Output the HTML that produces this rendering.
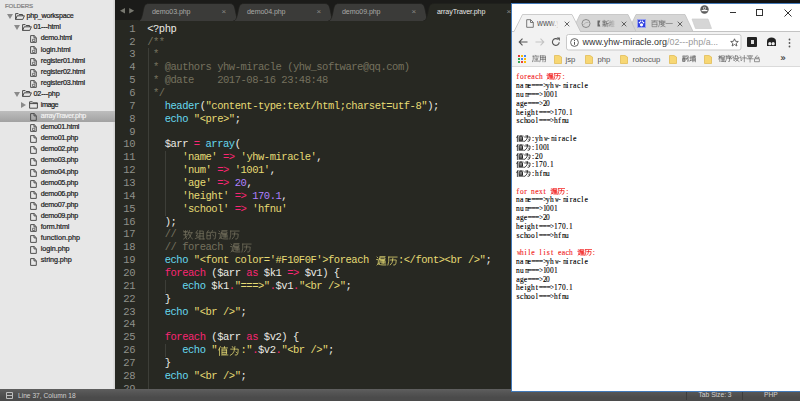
<!DOCTYPE html><html><head><meta charset="utf-8"><style>
*{margin:0;padding:0;box-sizing:border-box}
html,body{width:800px;height:401px;overflow:hidden;background:#121212;position:relative;font-family:"Liberation Sans",sans-serif}
.a{position:absolute}
#side{left:0;top:0;width:115px;height:390px;background:#e7e7e7}
.r{position:absolute;left:0;width:115px;height:11px}
.t{position:absolute;font-size:7.2px;line-height:11px;color:#1a1a1a;white-space:nowrap;-webkit-text-stroke:0.2px #1a1a1a}
.sel{background:linear-gradient(#bdbdbd,#a2a2a2)}
.sel .t{color:#f4f4f4;-webkit-text-stroke:0.15px #f4f4f4}
#ed{left:115px;top:0;width:396px;height:390px;background:#272822;overflow:hidden}
.ln{position:absolute;font-family:"Liberation Mono",monospace;font-size:10.5px;letter-spacing:-0.47px;line-height:13px;color:#8f908a;text-align:right;width:30px;left:-10px;white-space:pre}
.L{position:absolute;font-family:"Liberation Mono",monospace;font-size:10.5px;letter-spacing:-0.47px;line-height:13px;color:#ebebe5;white-space:pre}
.k{color:#f92672}.f{color:#66d9ef}.s{color:#e6db74}.n{color:#ae81ff}.c{color:#75715e}
.cj{display:inline-block;vertical-align:top}
#status{left:0;top:389px;width:800px;height:12px;background:linear-gradient(#5f5f5f,#555 30%,#4b4b4b 70%)}
#br{left:511px;top:3px;width:289px;height:389px;background:#fff;border:1px solid #4279b8;border-right:none}
.ct{position:absolute;left:516px;font-family:"Liberation Serif",serif;font-size:7.8px;line-height:8.76px;color:#000;white-space:pre;-webkit-text-stroke:0.12px currentColor}.ct i{display:inline-block;width:3.8px;text-align:center;font-style:normal;vertical-align:top;white-space:nowrap}.ct b{font-weight:normal}
</style></head><body>
<div id="side" class="a">
<div class="a" style="left:113px;top:0;width:2px;height:390px;background:linear-gradient(90deg,#e2e2e2,#d2d2d2)"></div>
<div class="a" style="left:5px;top:0.7px;font-size:6.1px;line-height:9px;color:#808080;letter-spacing:-0.12px;-webkit-text-stroke:0.2px #808080">FOLDERS</div>
<div class="r" style="top:11.10px">
<svg class="a" style="left:6.5px;top:3.0px" width="6" height="5" viewBox="0 0 6 5"><path d="M0 0h6l-3 5z" fill="#8a8a8a"/></svg>
<svg class="a" style="left:15px;top:1.6px" width="10" height="7" viewBox="0 0 10 7"><path d="M0.6 6.4V0.6h2.6l0.9 0.9h3.4v1.3 M0.6 6.4l1.6-3.6h7.2l-1.6 3.6z" fill="none" stroke="#3a3a3a" stroke-width="0.9" stroke-linejoin="round"/></svg>
<div class="t" style="left:26.5px;top:-0.80px;letter-spacing:-0.256px">php_workspace</div>
</div>
<div class="r" style="top:22.21px">
<svg class="a" style="left:14px;top:3.0px" width="6" height="5" viewBox="0 0 6 5"><path d="M0 0h6l-3 5z" fill="#8a8a8a"/></svg>
<svg class="a" style="left:22px;top:1.6px" width="10" height="7" viewBox="0 0 10 7"><path d="M0.6 6.4V0.6h2.6l0.9 0.9h3.4v1.3 M0.6 6.4l1.6-3.6h7.2l-1.6 3.6z" fill="none" stroke="#3a3a3a" stroke-width="0.9" stroke-linejoin="round"/></svg>
<div class="t" style="left:33.5px;top:-0.82px;letter-spacing:-0.189px">01---html</div>
</div>
<div class="r" style="top:33.32px">
<svg class="a" style="left:29.5px;top:2px" width="7" height="8" viewBox="0 0 7 8"><path d="M0.6 0.6h3.6l2.1 2.1v4.7h-5.7z M4 0.6v2.3h2.3" fill="none" stroke="#4a4a4a" stroke-width="0.95" stroke-linejoin="round"/><path d="M2.6 4.2h2.2v2.3h-2.2z" fill="none" stroke="#555" stroke-width="0.8"/></svg>
<div class="t" style="left:40.8px;top:-0.85px;letter-spacing:-0.268px">demo.html</div>
</div>
<div class="r" style="top:44.43px">
<svg class="a" style="left:29.5px;top:2px" width="7" height="8" viewBox="0 0 7 8"><path d="M0.6 0.6h3.6l2.1 2.1v4.7h-5.7z M4 0.6v2.3h2.3" fill="none" stroke="#4a4a4a" stroke-width="0.95" stroke-linejoin="round"/><path d="M2.6 4.2h2.2v2.3h-2.2z" fill="none" stroke="#555" stroke-width="0.8"/></svg>
<div class="t" style="left:40.8px;top:-0.87px;letter-spacing:-0.101px">login.html</div>
</div>
<div class="r" style="top:55.54px">
<svg class="a" style="left:29.5px;top:2px" width="7" height="8" viewBox="0 0 7 8"><path d="M0.6 0.6h3.6l2.1 2.1v4.7h-5.7z M4 0.6v2.3h2.3" fill="none" stroke="#4a4a4a" stroke-width="0.95" stroke-linejoin="round"/><path d="M2.6 4.2h2.2v2.3h-2.2z" fill="none" stroke="#555" stroke-width="0.8"/></svg>
<div class="t" style="left:40.8px;top:-0.89px;letter-spacing:-0.234px">register01.html</div>
</div>
<div class="r" style="top:66.65px">
<svg class="a" style="left:29.5px;top:2px" width="7" height="8" viewBox="0 0 7 8"><path d="M0.6 0.6h3.6l2.1 2.1v4.7h-5.7z M4 0.6v2.3h2.3" fill="none" stroke="#4a4a4a" stroke-width="0.95" stroke-linejoin="round"/><path d="M2.6 4.2h2.2v2.3h-2.2z" fill="none" stroke="#555" stroke-width="0.8"/></svg>
<div class="t" style="left:40.8px;top:-0.92px;letter-spacing:-0.234px">register02.html</div>
</div>
<div class="r" style="top:77.76px">
<svg class="a" style="left:29.5px;top:2px" width="7" height="8" viewBox="0 0 7 8"><path d="M0.6 0.6h3.6l2.1 2.1v4.7h-5.7z M4 0.6v2.3h2.3" fill="none" stroke="#4a4a4a" stroke-width="0.95" stroke-linejoin="round"/><path d="M2.6 4.2h2.2v2.3h-2.2z" fill="none" stroke="#555" stroke-width="0.8"/></svg>
<div class="t" style="left:40.8px;top:-0.94px;letter-spacing:-0.234px">register03.html</div>
</div>
<div class="r" style="top:88.87px">
<svg class="a" style="left:14px;top:3.0px" width="6" height="5" viewBox="0 0 6 5"><path d="M0 0h6l-3 5z" fill="#8a8a8a"/></svg>
<svg class="a" style="left:22px;top:1.6px" width="10" height="7" viewBox="0 0 10 7"><path d="M0.6 6.4V0.6h2.6l0.9 0.9h3.4v1.3 M0.6 6.4l1.6-3.6h7.2l-1.6 3.6z" fill="none" stroke="#3a3a3a" stroke-width="0.9" stroke-linejoin="round"/></svg>
<div class="t" style="left:33.5px;top:-0.96px;letter-spacing:-0.139px">02---php</div>
</div>
<div class="r" style="top:99.98px">
<svg class="a" style="left:20.5px;top:2.5px" width="5" height="6" viewBox="0 0 5 6"><path d="M0 0v6l5-3z" fill="#8a8a8a"/></svg>
<svg class="a" style="left:29px;top:1.3px" width="9" height="8" viewBox="0 0 9 8"><path d="M0.6 7.2V0.8h2.8l0.9 1h4.1v5.4z M0.6 2.6h7.8" fill="none" stroke="#3a3a3a" stroke-width="0.9" stroke-linejoin="round"/></svg>
<div class="t" style="left:40.8px;top:-0.98px;letter-spacing:-0.482px">image</div>
</div>
<div class="r sel" style="top:111.09px">
<svg class="a" style="left:29.5px;top:2px" width="7" height="8" viewBox="0 0 7 8"><path d="M0.6 0.6h3.6l2.1 2.1v4.7h-5.7z M4 0.6v2.3h2.3" fill="none" stroke="#4a4a4a" stroke-width="0.95" stroke-linejoin="round"/></svg>
<div class="t" style="left:40.8px;top:-1.01px;letter-spacing:-0.357px">arrayTraver.php</div>
</div>
<div class="r" style="top:122.20px">
<svg class="a" style="left:29.5px;top:2px" width="7" height="8" viewBox="0 0 7 8"><path d="M0.6 0.6h3.6l2.1 2.1v4.7h-5.7z M4 0.6v2.3h2.3" fill="none" stroke="#4a4a4a" stroke-width="0.95" stroke-linejoin="round"/><path d="M2.6 4.2h2.2v2.3h-2.2z" fill="none" stroke="#555" stroke-width="0.8"/></svg>
<div class="t" style="left:40.8px;top:-1.03px;letter-spacing:-0.293px">demo01.html</div>
</div>
<div class="r" style="top:133.31px">
<svg class="a" style="left:29.5px;top:2px" width="7" height="8" viewBox="0 0 7 8"><path d="M0.6 0.6h3.6l2.1 2.1v4.7h-5.7z M4 0.6v2.3h2.3" fill="none" stroke="#4a4a4a" stroke-width="0.95" stroke-linejoin="round"/></svg>
<div class="t" style="left:40.8px;top:-1.05px;letter-spacing:-0.283px">demo01.php</div>
</div>
<div class="r" style="top:144.42px">
<svg class="a" style="left:29.5px;top:2px" width="7" height="8" viewBox="0 0 7 8"><path d="M0.6 0.6h3.6l2.1 2.1v4.7h-5.7z M4 0.6v2.3h2.3" fill="none" stroke="#4a4a4a" stroke-width="0.95" stroke-linejoin="round"/></svg>
<div class="t" style="left:40.8px;top:-1.08px;letter-spacing:-0.283px">demo02.php</div>
</div>
<div class="r" style="top:155.53px">
<svg class="a" style="left:29.5px;top:2px" width="7" height="8" viewBox="0 0 7 8"><path d="M0.6 0.6h3.6l2.1 2.1v4.7h-5.7z M4 0.6v2.3h2.3" fill="none" stroke="#4a4a4a" stroke-width="0.95" stroke-linejoin="round"/></svg>
<div class="t" style="left:40.8px;top:-1.10px;letter-spacing:-0.283px">demo03.php</div>
</div>
<div class="r" style="top:166.64px">
<svg class="a" style="left:29.5px;top:2px" width="7" height="8" viewBox="0 0 7 8"><path d="M0.6 0.6h3.6l2.1 2.1v4.7h-5.7z M4 0.6v2.3h2.3" fill="none" stroke="#4a4a4a" stroke-width="0.95" stroke-linejoin="round"/></svg>
<div class="t" style="left:40.8px;top:-1.12px;letter-spacing:-0.283px">demo04.php</div>
</div>
<div class="r" style="top:177.75px">
<svg class="a" style="left:29.5px;top:2px" width="7" height="8" viewBox="0 0 7 8"><path d="M0.6 0.6h3.6l2.1 2.1v4.7h-5.7z M4 0.6v2.3h2.3" fill="none" stroke="#4a4a4a" stroke-width="0.95" stroke-linejoin="round"/></svg>
<div class="t" style="left:40.8px;top:-1.15px;letter-spacing:-0.283px">demo05.php</div>
</div>
<div class="r" style="top:188.86px">
<svg class="a" style="left:29.5px;top:2px" width="7" height="8" viewBox="0 0 7 8"><path d="M0.6 0.6h3.6l2.1 2.1v4.7h-5.7z M4 0.6v2.3h2.3" fill="none" stroke="#4a4a4a" stroke-width="0.95" stroke-linejoin="round"/></svg>
<div class="t" style="left:40.8px;top:-1.17px;letter-spacing:-0.283px">demo06.php</div>
</div>
<div class="r" style="top:199.97px">
<svg class="a" style="left:29.5px;top:2px" width="7" height="8" viewBox="0 0 7 8"><path d="M0.6 0.6h3.6l2.1 2.1v4.7h-5.7z M4 0.6v2.3h2.3" fill="none" stroke="#4a4a4a" stroke-width="0.95" stroke-linejoin="round"/></svg>
<div class="t" style="left:40.8px;top:-1.19px;letter-spacing:-0.283px">demo07.php</div>
</div>
<div class="r" style="top:211.08px">
<svg class="a" style="left:29.5px;top:2px" width="7" height="8" viewBox="0 0 7 8"><path d="M0.6 0.6h3.6l2.1 2.1v4.7h-5.7z M4 0.6v2.3h2.3" fill="none" stroke="#4a4a4a" stroke-width="0.95" stroke-linejoin="round"/></svg>
<div class="t" style="left:40.8px;top:-1.21px;letter-spacing:-0.283px">demo09.php</div>
</div>
<div class="r" style="top:222.19px">
<svg class="a" style="left:29.5px;top:2px" width="7" height="8" viewBox="0 0 7 8"><path d="M0.6 0.6h3.6l2.1 2.1v4.7h-5.7z M4 0.6v2.3h2.3" fill="none" stroke="#4a4a4a" stroke-width="0.95" stroke-linejoin="round"/><path d="M2.6 4.2h2.2v2.3h-2.2z" fill="none" stroke="#555" stroke-width="0.8"/></svg>
<div class="t" style="left:40.8px;top:-1.24px;letter-spacing:-0.178px">form.html</div>
</div>
<div class="r" style="top:233.30px">
<svg class="a" style="left:29.5px;top:2px" width="7" height="8" viewBox="0 0 7 8"><path d="M0.6 0.6h3.6l2.1 2.1v4.7h-5.7z M4 0.6v2.3h2.3" fill="none" stroke="#4a4a4a" stroke-width="0.95" stroke-linejoin="round"/></svg>
<div class="t" style="left:40.8px;top:-1.26px;letter-spacing:-0.002px">function.php</div>
</div>
<div class="r" style="top:244.41px">
<svg class="a" style="left:29.5px;top:2px" width="7" height="8" viewBox="0 0 7 8"><path d="M0.6 0.6h3.6l2.1 2.1v4.7h-5.7z M4 0.6v2.3h2.3" fill="none" stroke="#4a4a4a" stroke-width="0.95" stroke-linejoin="round"/></svg>
<div class="t" style="left:40.8px;top:-1.28px;letter-spacing:-0.047px">login.php</div>
</div>
<div class="r" style="top:255.52px">
<svg class="a" style="left:29.5px;top:2px" width="7" height="8" viewBox="0 0 7 8"><path d="M0.6 0.6h3.6l2.1 2.1v4.7h-5.7z M4 0.6v2.3h2.3" fill="none" stroke="#4a4a4a" stroke-width="0.95" stroke-linejoin="round"/></svg>
<div class="t" style="left:40.8px;top:-1.31px;letter-spacing:-0.082px">string.php</div>
</div>
</div>
<div id="ed" class="a">
<div class="a" style="left:0;top:0;width:396px;height:20px;background:#1b1b19"></div>
<svg class="a" style="left:5px;top:8px" width="20" height="6" viewBox="0 0 20 6"><path d="M0 2.75L5 0v5.5z M9.2 0v5.5l5-2.75z" transform="translate(0 0)" fill="#77776f"/></svg>
<svg class="a" style="left:23.00px;top:0" width="102.60" height="21" viewBox="0 0 102.60 21"><path d="M0 21 C3 21 4 17 5 12 C6 6 7 3.5 11 3.5 H91.60 C95.60 3.5 96.60 6 97.60 12 C98.60 17 99.60 21 102.60 21 Z" fill="#3b3b39"/><path d="M0 21 C3 21 4 17 5 12 C6 6 7 3.5 11 3.5 H91.60 C95.60 3.5 96.60 6 97.60 12 C98.60 17 99.60 21 102.60 21" fill="none" stroke="#1f1f1d" stroke-width="0.7"/></svg>
<div class="a" style="left:37.00px;top:6px;font-size:7.1px;line-height:12px;color:#a9a9a6;white-space:nowrap;letter-spacing:-0.1px">demo03.php</div>
<div class="a" style="left:106.50px;top:6px;font-size:8px;line-height:12px;color:#8a8a86">&#215;</div>
<svg class="a" style="left:118.00px;top:0" width="102.60" height="21" viewBox="0 0 102.60 21"><path d="M0 21 C3 21 4 17 5 12 C6 6 7 3.5 11 3.5 H91.60 C95.60 3.5 96.60 6 97.60 12 C98.60 17 99.60 21 102.60 21 Z" fill="#3b3b39"/><path d="M0 21 C3 21 4 17 5 12 C6 6 7 3.5 11 3.5 H91.60 C95.60 3.5 96.60 6 97.60 12 C98.60 17 99.60 21 102.60 21" fill="none" stroke="#1f1f1d" stroke-width="0.7"/></svg>
<div class="a" style="left:132.00px;top:6px;font-size:7.1px;line-height:12px;color:#a9a9a6;white-space:nowrap;letter-spacing:-0.1px">demo04.php</div>
<div class="a" style="left:201.50px;top:6px;font-size:8px;line-height:12px;color:#8a8a86">&#215;</div>
<svg class="a" style="left:213.00px;top:0" width="102.60" height="21" viewBox="0 0 102.60 21"><path d="M0 21 C3 21 4 17 5 12 C6 6 7 3.5 11 3.5 H91.60 C95.60 3.5 96.60 6 97.60 12 C98.60 17 99.60 21 102.60 21 Z" fill="#3b3b39"/><path d="M0 21 C3 21 4 17 5 12 C6 6 7 3.5 11 3.5 H91.60 C95.60 3.5 96.60 6 97.60 12 C98.60 17 99.60 21 102.60 21" fill="none" stroke="#1f1f1d" stroke-width="0.7"/></svg>
<div class="a" style="left:227.00px;top:6px;font-size:7.1px;line-height:12px;color:#a9a9a6;white-space:nowrap;letter-spacing:-0.1px">demo09.php</div>
<div class="a" style="left:296.50px;top:6px;font-size:8px;line-height:12px;color:#8a8a86">&#215;</div>
<svg class="a" style="left:308.00px;top:0" width="102.60" height="21" viewBox="0 0 102.60 21"><path d="M0 21 C3 21 4 17 5 12 C6 6 7 3.5 11 3.5 H91.60 C95.60 3.5 96.60 6 97.60 12 C98.60 17 99.60 21 102.60 21 Z" fill="#272822"/><path d="M0 21 C3 21 4 17 5 12 C6 6 7 3.5 11 3.5 H91.60 C95.60 3.5 96.60 6 97.60 12 C98.60 17 99.60 21 102.60 21" fill="none" stroke="#1f1f1d" stroke-width="0.7"/></svg>
<div class="a" style="left:322.00px;top:6px;font-size:7.1px;line-height:12px;color:#e8e8e8;white-space:nowrap;letter-spacing:-0.1px">arrayTraver.php</div>
<div class="a" style="left:391.50px;top:6px;font-size:8px;line-height:12px;color:#8a8a86">&#215;</div>
<div class="a" style="left:32.50px;top:48.42px;width:1px;height:360.08px;background:#3d3e38"></div>
<div class="a" style="left:49.99px;top:151.30px;width:1px;height:64.30px;background:#3d3e38"></div>
<div class="a" style="left:49.99px;top:279.90px;width:1px;height:12.86px;background:#3d3e38"></div>
<div class="a" style="left:49.99px;top:344.20px;width:1px;height:12.86px;background:#3d3e38"></div>
<div class="ln" style="top:22.70px">1</div>
<div class="L" style="left:32.20px;top:22.70px">&lt;?php</div>
<div class="ln" style="top:35.56px">2</div>
<div class="L" style="left:32.20px;top:35.56px"><span class="c">/**</span></div>
<div class="ln" style="top:48.42px">3</div>
<div class="L" style="left:32.20px;top:48.42px"><span class="c"> *</span></div>
<div class="ln" style="top:61.28px">4</div>
<div class="L" style="left:32.20px;top:61.28px"><span class="c"> * @authors yhw-miracle (yhw_software@qq.com)</span></div>
<div class="ln" style="top:74.14px">5</div>
<div class="L" style="left:32.20px;top:74.14px"><span class="c"> * @date    2017-08-16 23:48:48</span></div>
<div class="ln" style="top:87.00px">6</div>
<div class="L" style="left:32.20px;top:87.00px"><span class="c"> */</span></div>
<div class="ln" style="top:99.86px">7</div>
<div class="L" style="left:32.20px;top:99.86px">   <span class="f">header</span>(<span class="s">&quot;content-type:text/html;charset=utf-8&quot;</span>);</div>
<div class="ln" style="top:112.72px">8</div>
<div class="L" style="left:32.20px;top:112.72px">   <span class="f">echo</span> <span class="s">&quot;&lt;pre&gt;&quot;</span>;</div>
<div class="ln" style="top:125.58px">9</div>
<div class="ln" style="top:138.44px">10</div>
<div class="L" style="left:32.20px;top:138.44px">   $arr <span class="k">=</span> <span class="f">array</span>(</div>
<div class="ln" style="top:151.30px">11</div>
<div class="L" style="left:32.20px;top:151.30px">      <span class="s">&#x27;name&#x27;</span> <span class="k">=&gt;</span> <span class="s">&#x27;yhw-miracle&#x27;</span>,</div>
<div class="ln" style="top:164.16px">12</div>
<div class="L" style="left:32.20px;top:164.16px">      <span class="s">&#x27;num&#x27;</span> <span class="k">=&gt;</span> <span class="s">&#x27;1001&#x27;</span>,</div>
<div class="ln" style="top:177.02px">13</div>
<div class="L" style="left:32.20px;top:177.02px">      <span class="s">&#x27;age&#x27;</span> <span class="k">=&gt;</span> <span class="n">20</span>,</div>
<div class="ln" style="top:189.88px">14</div>
<div class="L" style="left:32.20px;top:189.88px">      <span class="s">&#x27;height&#x27;</span> <span class="k">=&gt;</span> <span class="n">170.1</span>,</div>
<div class="ln" style="top:202.74px">15</div>
<div class="L" style="left:32.20px;top:202.74px">      <span class="s">&#x27;school&#x27;</span> <span class="k">=&gt;</span> <span class="s">&#x27;hfnu&#x27;</span></div>
<div class="ln" style="top:215.60px">16</div>
<div class="L" style="left:32.20px;top:215.60px">   );</div>
<div class="ln" style="top:228.46px">17</div>
<div class="L" style="left:32.20px;top:228.46px">   <span class="c">// </span><svg class="cj" style="vertical-align:top" width="58.30" height="13.00" viewBox="0 0 58.30 13.00"><g transform="translate(0.83 1.80) scale(0.8333)"><path d="M1 2.5h4.5 M3.2 1v5 M1.2 1.3l1 1.5 M5.3 1.3l-1 1.5 M1 6h5 M2.5 6l2 5 M5 7.5l-4 3.5 M8 1l-1.5 4 M7 3.5h4.5 M10.5 3.5q-1 5 -4 7.5 M7.5 5.5q1.5 4 4 5.5" fill="none" stroke="#75715e" stroke-width="0.900" stroke-linecap="square"/></g><g transform="translate(12.49 1.80) scale(0.8333)"><path d="M3.5 1l-2 3h3l-2.5 3.5h3.5 M1 10.5l4-1.5 M6.5 1.5h4v9.5 M6.5 1.5v9.5 M6.5 4.5h4 M6.5 7.5h4 M5.5 11h6.5" fill="none" stroke="#75715e" stroke-width="0.900" stroke-linecap="square"/></g><g transform="translate(24.15 1.80) scale(0.8333)"><path d="M2.5 1l-1 1.5 M1.5 3h3.5v8h-3.5z M1.5 7h3.5 M7.5 1l-1 2.5 M7 3h4.5q0 6-1 8h-1 M8 6l1 1.5" fill="none" stroke="#75715e" stroke-width="0.900" stroke-linecap="square"/></g><g transform="translate(35.81 1.80) scale(0.8333)"><path d="M1.5 1.5l1 1 M1 4.5h2v5l-1.5 1.5 M2.5 9.5q2 2 9.5 1.5 M5 1h6 M5 2.5h6v2h-6z M5 2.5v5l-1 2 M6 5.5h5v4 M6 7.5h5 M7.5 5.5v4 M9 5.5v4" fill="none" stroke="#75715e" stroke-width="0.900" stroke-linecap="square"/></g><g transform="translate(47.47 1.80) scale(0.8333)"><path d="M1.5 1.5h10 M1.5 1.5v5l-1 4.5 M3.5 5h7q0 5-1.5 6h-1.5 M6.5 3q0 6-3 8" fill="none" stroke="#75715e" stroke-width="0.900" stroke-linecap="square"/></g></svg></div>
<div class="ln" style="top:241.32px">18</div>
<div class="L" style="left:32.20px;top:241.32px">   <span class="c">// foreach </span><svg class="cj" style="vertical-align:top" width="23.32" height="13.00" viewBox="0 0 23.32 13.00"><g transform="translate(0.83 1.80) scale(0.8333)"><path d="M1.5 1.5l1 1 M1 4.5h2v5l-1.5 1.5 M2.5 9.5q2 2 9.5 1.5 M5 1h6 M5 2.5h6v2h-6z M5 2.5v5l-1 2 M6 5.5h5v4 M6 7.5h5 M7.5 5.5v4 M9 5.5v4" fill="none" stroke="#75715e" stroke-width="0.900" stroke-linecap="square"/></g><g transform="translate(12.49 1.80) scale(0.8333)"><path d="M1.5 1.5h10 M1.5 1.5v5l-1 4.5 M3.5 5h7q0 5-1.5 6h-1.5 M6.5 3q0 6-3 8" fill="none" stroke="#75715e" stroke-width="0.900" stroke-linecap="square"/></g></svg></div>
<div class="ln" style="top:254.18px">19</div>
<div class="L" style="left:32.20px;top:254.18px">   <span class="f">echo</span> <span class="s">"&lt;font color='#F10F0F'&gt;foreach <svg class="cj" style="vertical-align:top" width="23.32" height="13.00" viewBox="0 0 23.32 13.00"><g transform="translate(0.83 1.80) scale(0.8333)"><path d="M1.5 1.5l1 1 M1 4.5h2v5l-1.5 1.5 M2.5 9.5q2 2 9.5 1.5 M5 1h6 M5 2.5h6v2h-6z M5 2.5v5l-1 2 M6 5.5h5v4 M6 7.5h5 M7.5 5.5v4 M9 5.5v4" fill="none" stroke="#e6db74" stroke-width="0.900" stroke-linecap="square"/></g><g transform="translate(12.49 1.80) scale(0.8333)"><path d="M1.5 1.5h10 M1.5 1.5v5l-1 4.5 M3.5 5h7q0 5-1.5 6h-1.5 M6.5 3q0 6-3 8" fill="none" stroke="#e6db74" stroke-width="0.900" stroke-linecap="square"/></g></svg>:&lt;/font&gt;&lt;br /&gt;"</span>;</div>
<div class="ln" style="top:267.04px">20</div>
<div class="L" style="left:32.20px;top:267.04px">   <span class="k">foreach</span> ($arr <span class="k">as</span> $k1 <span class="k">=&gt;</span> $v1) {</div>
<div class="ln" style="top:279.90px">21</div>
<div class="L" style="left:32.20px;top:279.90px">      <span class="f">echo</span> $k1<span class="k">.</span><span class="s">&quot;===&gt;&quot;</span><span class="k">.</span>$v1<span class="k">.</span><span class="s">&quot;&lt;br /&gt;&quot;</span>;</div>
<div class="ln" style="top:292.76px">22</div>
<div class="L" style="left:32.20px;top:292.76px">   }</div>
<div class="ln" style="top:305.62px">23</div>
<div class="L" style="left:32.20px;top:305.62px">   <span class="f">echo</span> <span class="s">&quot;&lt;br /&gt;&quot;</span>;</div>
<div class="ln" style="top:318.48px">24</div>
<div class="ln" style="top:331.34px">25</div>
<div class="L" style="left:32.20px;top:331.34px">   <span class="k">foreach</span> ($arr <span class="k">as</span> $v2) {</div>
<div class="ln" style="top:344.20px">26</div>
<div class="L" style="left:32.20px;top:344.20px">      <span class="f">echo</span> <span class="s">"<svg class="cj" style="vertical-align:top" width="23.32" height="13.00" viewBox="0 0 23.32 13.00"><g transform="translate(0.83 1.80) scale(0.8333)"><path d="M3 1l-2 4 M2 3.5v8 M4.5 2.5h7 M8 1v1.5 M5.5 4h5v6h-5z M5.5 6h5 M5.5 8h5 M4.5 11h7.5" fill="none" stroke="#e6db74" stroke-width="0.900" stroke-linecap="square"/></g><g transform="translate(12.49 1.80) scale(0.8333)"><path d="M3.5 1l1 1.5 M6.5 1l-1 5.5q-1 3.5-4.5 5 M1.5 4h9q0 6-1.5 7h-2 M8 7.5l1 1" fill="none" stroke="#e6db74" stroke-width="0.900" stroke-linecap="square"/></g></svg>:"</span><span class="k">.</span>$v2<span class="k">.</span><span class="s">&quot;&lt;br /&gt;&quot;</span>;</div>
<div class="ln" style="top:357.06px">27</div>
<div class="L" style="left:32.20px;top:357.06px">   }</div>
<div class="ln" style="top:369.92px">28</div>
<div class="L" style="left:32.20px;top:369.92px">   <span class="f">echo</span> <span class="s">&quot;&lt;br /&gt;&quot;</span>;</div>
<div class="ln" style="top:382.78px">29</div>
</div>
<div id="status" class="a">
<svg class="a" style="left:6px;top:2.7px" width="7" height="7" viewBox="0 0 7 7"><path d="M0.5 0.5h6v6h-6z M0.5 3.5h6" fill="none" stroke="#bdbdbd" stroke-width="1"/></svg>
<div class="a" style="left:18px;top:1.5px;font-size:6.65px;line-height:10px;color:#cfcfcf;white-space:nowrap">Line 37, Column 18</div>
<div class="a" style="left:686px;top:0;width:1px;height:11px;background:#3c3c3c"></div>
<div class="a" style="left:742px;top:0;width:1px;height:11px;background:#3c3c3c"></div>
<div class="a" style="left:698.5px;top:0.8px;font-size:6.7px;line-height:10px;color:#cfcfcf;white-space:nowrap">Tab Size: 3</div>
<div class="a" style="left:764px;top:0.8px;font-size:6.7px;line-height:10px;color:#cfcfcf;white-space:nowrap">PHP</div>
</div>
<div id="br" class="a"></div>
<svg class="a" style="left:512px;top:4px" width="288" height="69" viewBox="512 4 288 69"><rect x="511" y="31" width="289" height="36" fill="#f2f2f2"/><path d="M511 31.5H800" stroke="#c3c3c3" stroke-width="1"/><path d="M692 19H708L711.5 28.5H695.5Z" fill="#d6d6d6" stroke="#cbcbcb" stroke-width="0.7"/><path d="M628 31.5L636 14.5H685L693 31.5Z" fill="#d6d6d6" stroke="#c0c0c0" stroke-width="0.8"/><path d="M572 31.5L580 14.5H628L636 31.5Z" fill="#d6d6d6" stroke="#c0c0c0" stroke-width="0.8"/><path d="M514 31.5L522.5 14.5H572L580.5 31.5" fill="#f2f2f2" stroke="#c0c0c0" stroke-width="0.8"/><rect x="514.5" y="31" width="65.5" height="1" fill="#f2f2f2"/><path d="M511 66.5H800" stroke="#dadada" stroke-width="1"/><rect x="566.5" y="34.5" width="174.5" height="15.5" rx="2" fill="#fff" stroke="#c9c9c9" stroke-width="1"/></svg>
<svg class="a" style="left:525.5px;top:18.5px" width="8" height="9" viewBox="0 0 8 9"><path d="M0.7 0.7h4l2.6 2.6v5h-6.6z M4.5 0.7v2.8h2.8" fill="none" stroke="#6a6a6a" stroke-width="0.9"/></svg>
<div class="a" style="left:537px;top:18px;font-size:8.2px;line-height:11px;color:#555;white-space:nowrap;width:21px;overflow:hidden">www.y</div>
<div class="a" style="left:550px;top:17px;width:9px;height:12px;background:linear-gradient(90deg,rgba(242,242,242,0),#f2f2f2)"></div>
<svg class="a" style="left:563.5px;top:20.5px" width="6" height="6" viewBox="0 0 6 6"><path d="M0.7 0.7l4.6 4.6M5.3 0.7l-4.6 4.6" stroke="#555" stroke-width="0.9"/></svg>
<svg class="a" style="left:581px;top:19px" width="10" height="9" viewBox="0 0 10 9"><circle cx="5" cy="4.5" r="4" fill="none" stroke="#8a8a8a" stroke-width="1"/><path d="M2.5 6c1-2 3-3 5-2.5" fill="none" stroke="#aaa" stroke-width="0.8"/></svg>
<svg class="a" style="left:595.5px;top:18.5px" width="19.20" height="9.00" viewBox="0 0 19.20 9.00"><g transform="translate(-0.20 1.10) scale(0.5667)"><path d="M3 0.5h5l-2 5.5 2 5.5h-5z" fill="#666"/></g><g transform="translate(6.20 1.10) scale(0.5667)"><path d="M3.5 0.5v1.5 M1 2h5 M2 3l1 1.5 M5 3l-1 1.5 M1 5h5 M3.5 5v6.5 M1 8h5 M2.5 8.5l-1.5 2 M4.5 8.5l1.5 2 M11 1l-3.5 1.5v4l-1 4.5 M7.5 6h4 M9.8 6v5.5" fill="none" stroke="#666" stroke-width="1.059" stroke-linecap="square"/></g><g transform="translate(12.60 1.10) scale(0.5667)"><path d="M1 4h3.5 M2.8 1v10l-1-0.5 M1 9l3.5-2 M6.5 1l-1 3 M6 3v8.5 M6 3h5.5 M8.5 1.5v10 M6 5.5h5 M6 8h5 M6 11h6" fill="none" stroke="#666" stroke-width="1.059" stroke-linecap="square"/></g></svg>
<div class="a" style="left:607px;top:17px;width:9px;height:11px;background:linear-gradient(90deg,rgba(214,214,214,0),#d6d6d6)"></div>
<svg class="a" style="left:620.5px;top:20.5px" width="6" height="6" viewBox="0 0 6 6"><path d="M0.7 0.7l4.6 4.6M5.3 0.7l-4.6 4.6" stroke="#555" stroke-width="0.9"/></svg>
<div class="a" style="left:637px;top:19px;width:9px;height:9px;background:#2f3fe0;border:1px solid #9aa2f0"></div>
<svg class="a" style="left:638px;top:20px" width="7" height="7" viewBox="0 0 7 7"><circle cx="3.5" cy="4.8" r="1.6" fill="#fff"/><circle cx="1.5" cy="2.6" r="0.8" fill="#fff"/><circle cx="5.5" cy="2.6" r="0.8" fill="#fff"/><circle cx="2.6" cy="1.3" r="0.7" fill="#fff"/><circle cx="4.4" cy="1.3" r="0.7" fill="#fff"/></svg>
<svg class="a" style="left:651px;top:18.5px" width="21.60" height="9.00" viewBox="0 0 21.60 9.00"><g transform="translate(0.10 1.00) scale(0.5833)"><path d="M1 1.5h10.5 M6 1.5l-1 2 M2.5 3.5h7.5v8h-7.5z M2.5 7.5h7.5" fill="none" stroke="#6a6a6a" stroke-width="1.029" stroke-linecap="square"/></g><g transform="translate(7.30 1.00) scale(0.5833)"><path d="M6 0.5l0.6 1 M1.5 2h10 M2 2v5.5l-1.5 4 M3.5 4h8 M5 3v3h4.5v-3 M4 7.5h6.5q-2 3-6 4 M5 7.5q2 3 6.5 4" fill="none" stroke="#6a6a6a" stroke-width="1.029" stroke-linecap="square"/></g><g transform="translate(14.50 1.00) scale(0.5833)"><path d="M1 6h10.5" fill="none" stroke="#6a6a6a" stroke-width="1.029" stroke-linecap="square"/></g></svg>
<svg class="a" style="left:677px;top:20.5px" width="6" height="6" viewBox="0 0 6 6"><path d="M0.7 0.7l4.6 4.6M5.3 0.7l-4.6 4.6" stroke="#555" stroke-width="0.9"/></svg>
<svg class="a" style="left:700px;top:4.7px" width="9" height="9" viewBox="0 0 9 9"><circle cx="4.5" cy="4.5" r="4.2" fill="#5e5e5e"/><circle cx="4.5" cy="3.2" r="1.5" fill="#fff"/><path d="M1.6 5.6h5.8" stroke="#fff" stroke-width="1.2"/><circle cx="4.5" cy="3.2" r="1.0" fill="#5e5e5e"/></svg>
<div class="a" style="left:730px;top:12px;width:6px;height:1px;background:#333"></div>
<div class="a" style="left:755.5px;top:8.5px;width:7px;height:7px;border:1px solid #333"></div>
<svg class="a" style="left:783.5px;top:8.5px" width="8" height="8" viewBox="0 0 8 8"><path d="M0.5 0.5l7 7M7.5 0.5l-7 7" stroke="#333" stroke-width="1"/></svg>
<svg class="a" style="left:517.5px;top:37.5px" width="10" height="8" viewBox="0 0 10 8"><path d="M9.5 4H1.2M4.5 0.7L1.2 4l3.3 3.3" fill="none" stroke="#555" stroke-width="1.1"/></svg>
<svg class="a" style="left:534.5px;top:37.5px" width="10" height="8" viewBox="0 0 10 8"><path d="M0.5 4h8.3M5.5 0.7L8.8 4l-3.3 3.3" fill="none" stroke="#c4c4c4" stroke-width="1.1"/></svg>
<svg class="a" style="left:550.5px;top:36.5px" width="10" height="10" viewBox="0 0 10 10"><path d="M8.2 5.2A3.4 3.4 0 1 1 7 2.4" fill="none" stroke="#555" stroke-width="1.1"/><path d="M5.6 0.6h3.3v3.3z" fill="#5a5a5a"/></svg>
<svg class="a" style="left:569.5px;top:37.5px" width="9" height="9" viewBox="0 0 9 9"><circle cx="4.5" cy="4.5" r="3.9" fill="none" stroke="#555" stroke-width="0.9"/><path d="M4.5 3.8v3" stroke="#555" stroke-width="1"/><circle cx="4.5" cy="2.4" r="0.55" fill="#555"/></svg>
<div class="a" style="left:582.5px;top:36px;font-size:8.95px;line-height:12px;color:#333;white-space:nowrap;letter-spacing:0px">www.yhw-miracle.org<span style="color:#9a9a9a">/02---php/a...</span></div>
<svg class="a" style="left:729.5px;top:37.5px" width="9" height="9" viewBox="0 0 9 9"><path d="M4.5 0.8l1.1 2.5 2.7 0.2-2.1 1.8 0.7 2.7-2.4-1.5-2.4 1.5 0.7-2.7-2.1-1.8 2.7-0.2z" fill="none" stroke="#555" stroke-width="0.9" stroke-linejoin="round"/></svg>
<div class="a" style="left:747px;top:37px;width:10px;height:10px;background:#222;border-radius:1px"></div>
<div class="a" style="left:751px;top:39.5px;width:2.5px;height:4px;background:#ddd"></div>
<svg class="a" style="left:765.5px;top:37px" width="11" height="10" viewBox="0 0 11 10"><path d="M1 9V4.5C1 1.5 3 0.5 5.5 0.5S10 1.5 10 4.5V9z" fill="#222"/><circle cx="3.8" cy="6.7" r="1.6" fill="#eee"/><circle cx="7.2" cy="6.7" r="1.6" fill="#eee"/></svg>
<svg class="a" style="left:788px;top:37.5px" width="3" height="10" viewBox="0 0 3 10"><circle cx="1.5" cy="1.5" r="0.9" fill="#555"/><circle cx="1.5" cy="5" r="0.9" fill="#555"/><circle cx="1.5" cy="8.5" r="0.9" fill="#555"/></svg>
<svg class="a" style="left:518px;top:54.5px" width="8" height="8" viewBox="0 0 8 8"><rect x="0" y="0" width="2" height="2" fill="#e53935"/><rect x="3" y="0" width="2" height="2" fill="#fbbc05"/><rect x="6" y="0" width="2" height="2" fill="#4285f4"/><rect x="0" y="3" width="2" height="2" fill="#34a853"/><rect x="3" y="3" width="2" height="2" fill="#4285f4"/><rect x="6" y="3" width="2" height="2" fill="#fbbc05"/><rect x="0" y="6" width="2" height="2" fill="#34a853"/><rect x="3" y="6" width="2" height="2" fill="#ea4335"/><rect x="6" y="6" width="2" height="2" fill="#fbbc05"/></svg>
<svg class="a" style="left:531.5px;top:54px" width="14.40" height="9.00" viewBox="0 0 14.40 9.00"><g transform="translate(0.10 1.00) scale(0.5833)"><path d="M6 0.5l0.8 1 M1.5 2h10 M2 2v5.5l-1.5 4 M4.5 5l1 3 M7 4.5l0.6 4 M10 4.5l-1.2 4 M3.5 10.5h8" fill="none" stroke="#555" stroke-width="1.029" stroke-linecap="square"/></g><g transform="translate(7.30 1.00) scale(0.5833)"><path d="M2 1.5h8.5v10h-1 M2 1.5v6l-1 4 M2 4.5h8.5 M2 7.5h8.5 M6.2 1.5v10" fill="none" stroke="#555" stroke-width="1.029" stroke-linecap="square"/></g></svg>
<svg class="a" style="left:553.5px;top:54.5px" width="8" height="9" viewBox="0 0 8 9"><path d="M0.5 0.5h4.5l2.5 1.5v6.5h-7z" fill="#f7d774" stroke="#e0b84a" stroke-width="0.7"/></svg>
<svg class="a" style="left:584.5px;top:54.5px" width="8" height="9" viewBox="0 0 8 9"><path d="M0.5 0.5h4.5l2.5 1.5v6.5h-7z" fill="#f7d774" stroke="#e0b84a" stroke-width="0.7"/></svg>
<svg class="a" style="left:619.5px;top:54.5px" width="8" height="9" viewBox="0 0 8 9"><path d="M0.5 0.5h4.5l2.5 1.5v6.5h-7z" fill="#f7d774" stroke="#e0b84a" stroke-width="0.7"/></svg>
<svg class="a" style="left:668.5px;top:54.5px" width="8" height="9" viewBox="0 0 8 9"><path d="M0.5 0.5h4.5l2.5 1.5v6.5h-7z" fill="#f7d774" stroke="#e0b84a" stroke-width="0.7"/></svg>
<svg class="a" style="left:703.5px;top:54.5px" width="8" height="9" viewBox="0 0 8 9"><path d="M0.5 0.5h4.5l2.5 1.5v6.5h-7z" fill="#f7d774" stroke="#e0b84a" stroke-width="0.7"/></svg>
<div class="a" style="left:565.5px;top:53.5px;font-size:7.7px;line-height:11px;color:#555;white-space:nowrap">jsp</div>
<div class="a" style="left:597.5px;top:53.5px;font-size:7.7px;line-height:11px;color:#555;white-space:nowrap">php</div>
<div class="a" style="left:632.5px;top:53.5px;font-size:7.7px;line-height:11px;color:#555;white-space:nowrap">robocup</div>
<svg class="a" style="left:682px;top:54px" width="14.40" height="9.00" viewBox="0 0 14.40 9.00"><g transform="translate(0.10 1.00) scale(0.5833)"><path d="M1 2h4.5 M1 3.5l1 1 M5.5 3.5l-1 1 M3.2 1.5v4 M1 5.5h4.5 M1.5 6.5h3.5v4.5h-3.5z M1.5 8.5h3.5 M3.2 6.5v4.5 M7 1.5h3.5v4h-3.5 M8 3l1 1 M7 6.5h3.5v4.5h-0.5 M8 8l1 1" fill="none" stroke="#555" stroke-width="1.029" stroke-linecap="square"/></g><g transform="translate(7.30 1.00) scale(0.5833)"><path d="M1 5h3.5 M2.7 2v7l-1.5 1 M1 10l3-1 M5 2h6.5 M8.3 1v2.5 M5 3.5h6.5 M6 5h4.5v6.5 M6 5v6.5 M7 7h2.5v3h-2.5z" fill="none" stroke="#555" stroke-width="1.029" stroke-linecap="square"/></g></svg>
<svg class="a" style="left:717.5px;top:54px" width="42.60" height="9.00" viewBox="0 0 42.60 9.00"><g transform="translate(0.05 1.00) scale(0.5833)"><path d="M1 3h4 M3 1v10 M3 4l-2 3 M3 4l2 2 M6 1.5h5v3h-5z M6 6.5h5 M8.5 6.5v4.5 M6 8.5h5 M5.5 11h6.5" fill="none" stroke="#555" stroke-width="1.029" stroke-linecap="square"/></g><g transform="translate(7.15 1.00) scale(0.5833)"><path d="M6 0.5l0.6 1 M1.5 2h10 M2 2v5.5l-1.5 4 M4 3.5h6l-2.5 2 M3.5 5.5h8l-1 1.5 M7.5 5.5v5.5h-1.5" fill="none" stroke="#555" stroke-width="1.029" stroke-linecap="square"/></g><g transform="translate(14.25 1.00) scale(0.5833)"><path d="M1.5 1.5l1.2 1.2 M1 4.5h2v5.5l1.5-1.5 M5.5 1.5h3.5v2.5h2 M5.5 1.5v2l-0.8 1.5 M5 6h6l-5 5 M6 7.5l5.5 3.5" fill="none" stroke="#555" stroke-width="1.029" stroke-linecap="square"/></g><g transform="translate(21.35 1.00) scale(0.5833)"><path d="M1.5 1.5l1.2 1.2 M1 4.5h2v5.5l1.5-1.5 M5 5h7 M8.5 1v10.5" fill="none" stroke="#555" stroke-width="1.029" stroke-linecap="square"/></g><g transform="translate(28.45 1.00) scale(0.5833)"><path d="M1.5 1.5h9 M3.5 3l1 2 M9 3l-1 2 M1 6.5h10.5 M6.2 1.5v10.5" fill="none" stroke="#555" stroke-width="1.029" stroke-linecap="square"/></g><g transform="translate(35.55 1.00) scale(0.5833)"><path d="M6 1l-3.5 4h7l-1-1.5 M2.5 6.5h7.5v5h-7.5z" fill="none" stroke="#555" stroke-width="1.029" stroke-linecap="square"/></g></svg>
<div class="a" style="left:780.5px;top:52.5px;font-size:9px;line-height:11px;color:#333;-webkit-text-stroke:0.2px #333">&#187;</div>
<div class="ct" style="top:73.42px;color:#f11f1f"><i>f</i><i><b style="display:inline-block;transform:scaleX(0.95)">o</b></i><i>r</i><i>e</i><i>a</i><i>c</i><i><b style="display:inline-block;transform:scaleX(0.95)">h</b></i><i> </i><svg class="cj" style="vertical-align:top" width="15.20" height="8.76" viewBox="0 0 15.20 8.76"><g transform="translate(0.20 -0.42) scale(0.6000)"><path d="M1.5 1.5l1 1 M1 4.5h2v5l-1.5 1.5 M2.5 9.5q2 2 9.5 1.5 M5 1h6 M5 2.5h6v2h-6z M5 2.5v5l-1 2 M6 5.5h5v4 M6 7.5h5 M7.5 5.5v4 M9 5.5v4" fill="none" stroke="#f11f1f" stroke-width="1.250" stroke-linecap="square"/></g><g transform="translate(7.80 -0.42) scale(0.6000)"><path d="M1.5 1.5h10 M1.5 1.5v5l-1 4.5 M3.5 5h7q0 5-1.5 6h-1.5 M6.5 3q0 6-3 8" fill="none" stroke="#f11f1f" stroke-width="1.250" stroke-linecap="square"/></g></svg><i>:</i></div>
<div class="ct" style="top:82.21px;color:#000"><i><b style="display:inline-block;transform:scaleX(0.95)">n</b></i><i>a</i><i><b style="display:inline-block;transform:scaleX(0.61)">m</b></i><i>e</i><i>=</i><i>=</i><i>=</i><i><b style="display:inline-block;transform:scaleX(0.84)">&gt;</b></i><i><b style="display:inline-block;transform:scaleX(0.95)">y</b></i><i><b style="display:inline-block;transform:scaleX(0.95)">h</b></i><i><b style="display:inline-block;transform:scaleX(0.66)">w</b></i><i>-</i><i><b style="display:inline-block;transform:scaleX(0.61)">m</b></i><i>i</i><i>r</i><i>a</i><i>c</i><i>l</i><i>e</i></div>
<div class="ct" style="top:91.00px;color:#000"><i><b style="display:inline-block;transform:scaleX(0.95)">n</b></i><i><b style="display:inline-block;transform:scaleX(0.95)">u</b></i><i><b style="display:inline-block;transform:scaleX(0.61)">m</b></i><i>=</i><i>=</i><i>=</i><i><b style="display:inline-block;transform:scaleX(0.84)">&gt;</b></i><i><b style="display:inline-block;transform:scaleX(0.95)">1</b></i><i><b style="display:inline-block;transform:scaleX(0.95)">0</b></i><i><b style="display:inline-block;transform:scaleX(0.95)">0</b></i><i><b style="display:inline-block;transform:scaleX(0.95)">1</b></i></div>
<div class="ct" style="top:99.79px;color:#000"><i>a</i><i><b style="display:inline-block;transform:scaleX(0.95)">g</b></i><i>e</i><i>=</i><i>=</i><i>=</i><i><b style="display:inline-block;transform:scaleX(0.84)">&gt;</b></i><i><b style="display:inline-block;transform:scaleX(0.95)">2</b></i><i><b style="display:inline-block;transform:scaleX(0.95)">0</b></i></div>
<div class="ct" style="top:108.58px;color:#000"><i><b style="display:inline-block;transform:scaleX(0.95)">h</b></i><i>e</i><i>i</i><i><b style="display:inline-block;transform:scaleX(0.95)">g</b></i><i><b style="display:inline-block;transform:scaleX(0.95)">h</b></i><i>t</i><i>=</i><i>=</i><i>=</i><i><b style="display:inline-block;transform:scaleX(0.84)">&gt;</b></i><i><b style="display:inline-block;transform:scaleX(0.95)">1</b></i><i><b style="display:inline-block;transform:scaleX(0.95)">7</b></i><i><b style="display:inline-block;transform:scaleX(0.95)">0</b></i><i>.</i><i><b style="display:inline-block;transform:scaleX(0.95)">1</b></i></div>
<div class="ct" style="top:117.37px;color:#000"><i>s</i><i>c</i><i><b style="display:inline-block;transform:scaleX(0.95)">h</b></i><i><b style="display:inline-block;transform:scaleX(0.95)">o</b></i><i><b style="display:inline-block;transform:scaleX(0.95)">o</b></i><i>l</i><i>=</i><i>=</i><i>=</i><i><b style="display:inline-block;transform:scaleX(0.84)">&gt;</b></i><i><b style="display:inline-block;transform:scaleX(0.95)">h</b></i><i>f</i><i><b style="display:inline-block;transform:scaleX(0.95)">n</b></i><i><b style="display:inline-block;transform:scaleX(0.95)">u</b></i></div>
<div class="ct" style="top:134.95px;color:#000"><svg class="cj" style="vertical-align:top" width="15.20" height="8.76" viewBox="0 0 15.20 8.76"><g transform="translate(0.20 -0.42) scale(0.6000)"><path d="M3 1l-2 4 M2 3.5v8 M4.5 2.5h7 M8 1v1.5 M5.5 4h5v6h-5z M5.5 6h5 M5.5 8h5 M4.5 11h7.5" fill="none" stroke="#000" stroke-width="1.167" stroke-linecap="square"/></g><g transform="translate(7.80 -0.42) scale(0.6000)"><path d="M3.5 1l1 1.5 M6.5 1l-1 5.5q-1 3.5-4.5 5 M1.5 4h9q0 6-1.5 7h-2 M8 7.5l1 1" fill="none" stroke="#000" stroke-width="1.167" stroke-linecap="square"/></g></svg><i>:</i><i><b style="display:inline-block;transform:scaleX(0.95)">y</b></i><i><b style="display:inline-block;transform:scaleX(0.95)">h</b></i><i><b style="display:inline-block;transform:scaleX(0.66)">w</b></i><i>-</i><i><b style="display:inline-block;transform:scaleX(0.61)">m</b></i><i>i</i><i>r</i><i>a</i><i>c</i><i>l</i><i>e</i></div>
<div class="ct" style="top:143.74px;color:#000"><svg class="cj" style="vertical-align:top" width="15.20" height="8.76" viewBox="0 0 15.20 8.76"><g transform="translate(0.20 -0.42) scale(0.6000)"><path d="M3 1l-2 4 M2 3.5v8 M4.5 2.5h7 M8 1v1.5 M5.5 4h5v6h-5z M5.5 6h5 M5.5 8h5 M4.5 11h7.5" fill="none" stroke="#000" stroke-width="1.167" stroke-linecap="square"/></g><g transform="translate(7.80 -0.42) scale(0.6000)"><path d="M3.5 1l1 1.5 M6.5 1l-1 5.5q-1 3.5-4.5 5 M1.5 4h9q0 6-1.5 7h-2 M8 7.5l1 1" fill="none" stroke="#000" stroke-width="1.167" stroke-linecap="square"/></g></svg><i>:</i><i><b style="display:inline-block;transform:scaleX(0.95)">1</b></i><i><b style="display:inline-block;transform:scaleX(0.95)">0</b></i><i><b style="display:inline-block;transform:scaleX(0.95)">0</b></i><i><b style="display:inline-block;transform:scaleX(0.95)">1</b></i></div>
<div class="ct" style="top:152.53px;color:#000"><svg class="cj" style="vertical-align:top" width="15.20" height="8.76" viewBox="0 0 15.20 8.76"><g transform="translate(0.20 -0.42) scale(0.6000)"><path d="M3 1l-2 4 M2 3.5v8 M4.5 2.5h7 M8 1v1.5 M5.5 4h5v6h-5z M5.5 6h5 M5.5 8h5 M4.5 11h7.5" fill="none" stroke="#000" stroke-width="1.167" stroke-linecap="square"/></g><g transform="translate(7.80 -0.42) scale(0.6000)"><path d="M3.5 1l1 1.5 M6.5 1l-1 5.5q-1 3.5-4.5 5 M1.5 4h9q0 6-1.5 7h-2 M8 7.5l1 1" fill="none" stroke="#000" stroke-width="1.167" stroke-linecap="square"/></g></svg><i>:</i><i><b style="display:inline-block;transform:scaleX(0.95)">2</b></i><i><b style="display:inline-block;transform:scaleX(0.95)">0</b></i></div>
<div class="ct" style="top:161.32px;color:#000"><svg class="cj" style="vertical-align:top" width="15.20" height="8.76" viewBox="0 0 15.20 8.76"><g transform="translate(0.20 -0.42) scale(0.6000)"><path d="M3 1l-2 4 M2 3.5v8 M4.5 2.5h7 M8 1v1.5 M5.5 4h5v6h-5z M5.5 6h5 M5.5 8h5 M4.5 11h7.5" fill="none" stroke="#000" stroke-width="1.167" stroke-linecap="square"/></g><g transform="translate(7.80 -0.42) scale(0.6000)"><path d="M3.5 1l1 1.5 M6.5 1l-1 5.5q-1 3.5-4.5 5 M1.5 4h9q0 6-1.5 7h-2 M8 7.5l1 1" fill="none" stroke="#000" stroke-width="1.167" stroke-linecap="square"/></g></svg><i>:</i><i><b style="display:inline-block;transform:scaleX(0.95)">1</b></i><i><b style="display:inline-block;transform:scaleX(0.95)">7</b></i><i><b style="display:inline-block;transform:scaleX(0.95)">0</b></i><i>.</i><i><b style="display:inline-block;transform:scaleX(0.95)">1</b></i></div>
<div class="ct" style="top:170.11px;color:#000"><svg class="cj" style="vertical-align:top" width="15.20" height="8.76" viewBox="0 0 15.20 8.76"><g transform="translate(0.20 -0.42) scale(0.6000)"><path d="M3 1l-2 4 M2 3.5v8 M4.5 2.5h7 M8 1v1.5 M5.5 4h5v6h-5z M5.5 6h5 M5.5 8h5 M4.5 11h7.5" fill="none" stroke="#000" stroke-width="1.167" stroke-linecap="square"/></g><g transform="translate(7.80 -0.42) scale(0.6000)"><path d="M3.5 1l1 1.5 M6.5 1l-1 5.5q-1 3.5-4.5 5 M1.5 4h9q0 6-1.5 7h-2 M8 7.5l1 1" fill="none" stroke="#000" stroke-width="1.167" stroke-linecap="square"/></g></svg><i>:</i><i><b style="display:inline-block;transform:scaleX(0.95)">h</b></i><i>f</i><i><b style="display:inline-block;transform:scaleX(0.95)">n</b></i><i><b style="display:inline-block;transform:scaleX(0.95)">u</b></i></div>
<div class="ct" style="top:187.69px;color:#f11f1f"><i>f</i><i><b style="display:inline-block;transform:scaleX(0.95)">o</b></i><i>r</i><i> </i><i><b style="display:inline-block;transform:scaleX(0.95)">n</b></i><i>e</i><i><b style="display:inline-block;transform:scaleX(0.95)">x</b></i><i>t</i><i> </i><svg class="cj" style="vertical-align:top" width="15.20" height="8.76" viewBox="0 0 15.20 8.76"><g transform="translate(0.20 -0.42) scale(0.6000)"><path d="M1.5 1.5l1 1 M1 4.5h2v5l-1.5 1.5 M2.5 9.5q2 2 9.5 1.5 M5 1h6 M5 2.5h6v2h-6z M5 2.5v5l-1 2 M6 5.5h5v4 M6 7.5h5 M7.5 5.5v4 M9 5.5v4" fill="none" stroke="#f11f1f" stroke-width="1.250" stroke-linecap="square"/></g><g transform="translate(7.80 -0.42) scale(0.6000)"><path d="M1.5 1.5h10 M1.5 1.5v5l-1 4.5 M3.5 5h7q0 5-1.5 6h-1.5 M6.5 3q0 6-3 8" fill="none" stroke="#f11f1f" stroke-width="1.250" stroke-linecap="square"/></g></svg><i>:</i></div>
<div class="ct" style="top:196.48px;color:#000"><i><b style="display:inline-block;transform:scaleX(0.95)">n</b></i><i>a</i><i><b style="display:inline-block;transform:scaleX(0.61)">m</b></i><i>e</i><i>=</i><i>=</i><i>=</i><i><b style="display:inline-block;transform:scaleX(0.84)">&gt;</b></i><i><b style="display:inline-block;transform:scaleX(0.95)">y</b></i><i><b style="display:inline-block;transform:scaleX(0.95)">h</b></i><i><b style="display:inline-block;transform:scaleX(0.66)">w</b></i><i>-</i><i><b style="display:inline-block;transform:scaleX(0.61)">m</b></i><i>i</i><i>r</i><i>a</i><i>c</i><i>l</i><i>e</i></div>
<div class="ct" style="top:205.27px;color:#000"><i><b style="display:inline-block;transform:scaleX(0.95)">n</b></i><i><b style="display:inline-block;transform:scaleX(0.95)">u</b></i><i><b style="display:inline-block;transform:scaleX(0.61)">m</b></i><i>=</i><i>=</i><i>=</i><i><b style="display:inline-block;transform:scaleX(0.84)">&gt;</b></i><i><b style="display:inline-block;transform:scaleX(0.95)">1</b></i><i><b style="display:inline-block;transform:scaleX(0.95)">0</b></i><i><b style="display:inline-block;transform:scaleX(0.95)">0</b></i><i><b style="display:inline-block;transform:scaleX(0.95)">1</b></i></div>
<div class="ct" style="top:214.06px;color:#000"><i>a</i><i><b style="display:inline-block;transform:scaleX(0.95)">g</b></i><i>e</i><i>=</i><i>=</i><i>=</i><i><b style="display:inline-block;transform:scaleX(0.84)">&gt;</b></i><i><b style="display:inline-block;transform:scaleX(0.95)">2</b></i><i><b style="display:inline-block;transform:scaleX(0.95)">0</b></i></div>
<div class="ct" style="top:222.85px;color:#000"><i><b style="display:inline-block;transform:scaleX(0.95)">h</b></i><i>e</i><i>i</i><i><b style="display:inline-block;transform:scaleX(0.95)">g</b></i><i><b style="display:inline-block;transform:scaleX(0.95)">h</b></i><i>t</i><i>=</i><i>=</i><i>=</i><i><b style="display:inline-block;transform:scaleX(0.84)">&gt;</b></i><i><b style="display:inline-block;transform:scaleX(0.95)">1</b></i><i><b style="display:inline-block;transform:scaleX(0.95)">7</b></i><i><b style="display:inline-block;transform:scaleX(0.95)">0</b></i><i>.</i><i><b style="display:inline-block;transform:scaleX(0.95)">1</b></i></div>
<div class="ct" style="top:231.64px;color:#000"><i>s</i><i>c</i><i><b style="display:inline-block;transform:scaleX(0.95)">h</b></i><i><b style="display:inline-block;transform:scaleX(0.95)">o</b></i><i><b style="display:inline-block;transform:scaleX(0.95)">o</b></i><i>l</i><i>=</i><i>=</i><i>=</i><i><b style="display:inline-block;transform:scaleX(0.84)">&gt;</b></i><i><b style="display:inline-block;transform:scaleX(0.95)">h</b></i><i>f</i><i><b style="display:inline-block;transform:scaleX(0.95)">n</b></i><i><b style="display:inline-block;transform:scaleX(0.95)">u</b></i></div>
<div class="ct" style="top:249.22px;color:#f11f1f"><i><b style="display:inline-block;transform:scaleX(0.66)">w</b></i><i><b style="display:inline-block;transform:scaleX(0.95)">h</b></i><i>i</i><i>l</i><i>e</i><i> </i><i>l</i><i>i</i><i>s</i><i>t</i><i> </i><i>e</i><i>a</i><i>c</i><i><b style="display:inline-block;transform:scaleX(0.95)">h</b></i><i> </i><svg class="cj" style="vertical-align:top" width="15.20" height="8.76" viewBox="0 0 15.20 8.76"><g transform="translate(0.20 -0.42) scale(0.6000)"><path d="M1.5 1.5l1 1 M1 4.5h2v5l-1.5 1.5 M2.5 9.5q2 2 9.5 1.5 M5 1h6 M5 2.5h6v2h-6z M5 2.5v5l-1 2 M6 5.5h5v4 M6 7.5h5 M7.5 5.5v4 M9 5.5v4" fill="none" stroke="#f11f1f" stroke-width="1.250" stroke-linecap="square"/></g><g transform="translate(7.80 -0.42) scale(0.6000)"><path d="M1.5 1.5h10 M1.5 1.5v5l-1 4.5 M3.5 5h7q0 5-1.5 6h-1.5 M6.5 3q0 6-3 8" fill="none" stroke="#f11f1f" stroke-width="1.250" stroke-linecap="square"/></g></svg><i>:</i></div>
<div class="ct" style="top:258.01px;color:#000"><i><b style="display:inline-block;transform:scaleX(0.95)">n</b></i><i>a</i><i><b style="display:inline-block;transform:scaleX(0.61)">m</b></i><i>e</i><i>=</i><i>=</i><i>=</i><i><b style="display:inline-block;transform:scaleX(0.84)">&gt;</b></i><i><b style="display:inline-block;transform:scaleX(0.95)">y</b></i><i><b style="display:inline-block;transform:scaleX(0.95)">h</b></i><i><b style="display:inline-block;transform:scaleX(0.66)">w</b></i><i>-</i><i><b style="display:inline-block;transform:scaleX(0.61)">m</b></i><i>i</i><i>r</i><i>a</i><i>c</i><i>l</i><i>e</i></div>
<div class="ct" style="top:266.80px;color:#000"><i><b style="display:inline-block;transform:scaleX(0.95)">n</b></i><i><b style="display:inline-block;transform:scaleX(0.95)">u</b></i><i><b style="display:inline-block;transform:scaleX(0.61)">m</b></i><i>=</i><i>=</i><i>=</i><i><b style="display:inline-block;transform:scaleX(0.84)">&gt;</b></i><i><b style="display:inline-block;transform:scaleX(0.95)">1</b></i><i><b style="display:inline-block;transform:scaleX(0.95)">0</b></i><i><b style="display:inline-block;transform:scaleX(0.95)">0</b></i><i><b style="display:inline-block;transform:scaleX(0.95)">1</b></i></div>
<div class="ct" style="top:275.59px;color:#000"><i>a</i><i><b style="display:inline-block;transform:scaleX(0.95)">g</b></i><i>e</i><i>=</i><i>=</i><i>=</i><i><b style="display:inline-block;transform:scaleX(0.84)">&gt;</b></i><i><b style="display:inline-block;transform:scaleX(0.95)">2</b></i><i><b style="display:inline-block;transform:scaleX(0.95)">0</b></i></div>
<div class="ct" style="top:284.38px;color:#000"><i><b style="display:inline-block;transform:scaleX(0.95)">h</b></i><i>e</i><i>i</i><i><b style="display:inline-block;transform:scaleX(0.95)">g</b></i><i><b style="display:inline-block;transform:scaleX(0.95)">h</b></i><i>t</i><i>=</i><i>=</i><i>=</i><i><b style="display:inline-block;transform:scaleX(0.84)">&gt;</b></i><i><b style="display:inline-block;transform:scaleX(0.95)">1</b></i><i><b style="display:inline-block;transform:scaleX(0.95)">7</b></i><i><b style="display:inline-block;transform:scaleX(0.95)">0</b></i><i>.</i><i><b style="display:inline-block;transform:scaleX(0.95)">1</b></i></div>
<div class="ct" style="top:293.17px;color:#000"><i>s</i><i>c</i><i><b style="display:inline-block;transform:scaleX(0.95)">h</b></i><i><b style="display:inline-block;transform:scaleX(0.95)">o</b></i><i><b style="display:inline-block;transform:scaleX(0.95)">o</b></i><i>l</i><i>=</i><i>=</i><i>=</i><i><b style="display:inline-block;transform:scaleX(0.84)">&gt;</b></i><i><b style="display:inline-block;transform:scaleX(0.95)">h</b></i><i>f</i><i><b style="display:inline-block;transform:scaleX(0.95)">n</b></i><i><b style="display:inline-block;transform:scaleX(0.95)">u</b></i></div>
</body></html>
